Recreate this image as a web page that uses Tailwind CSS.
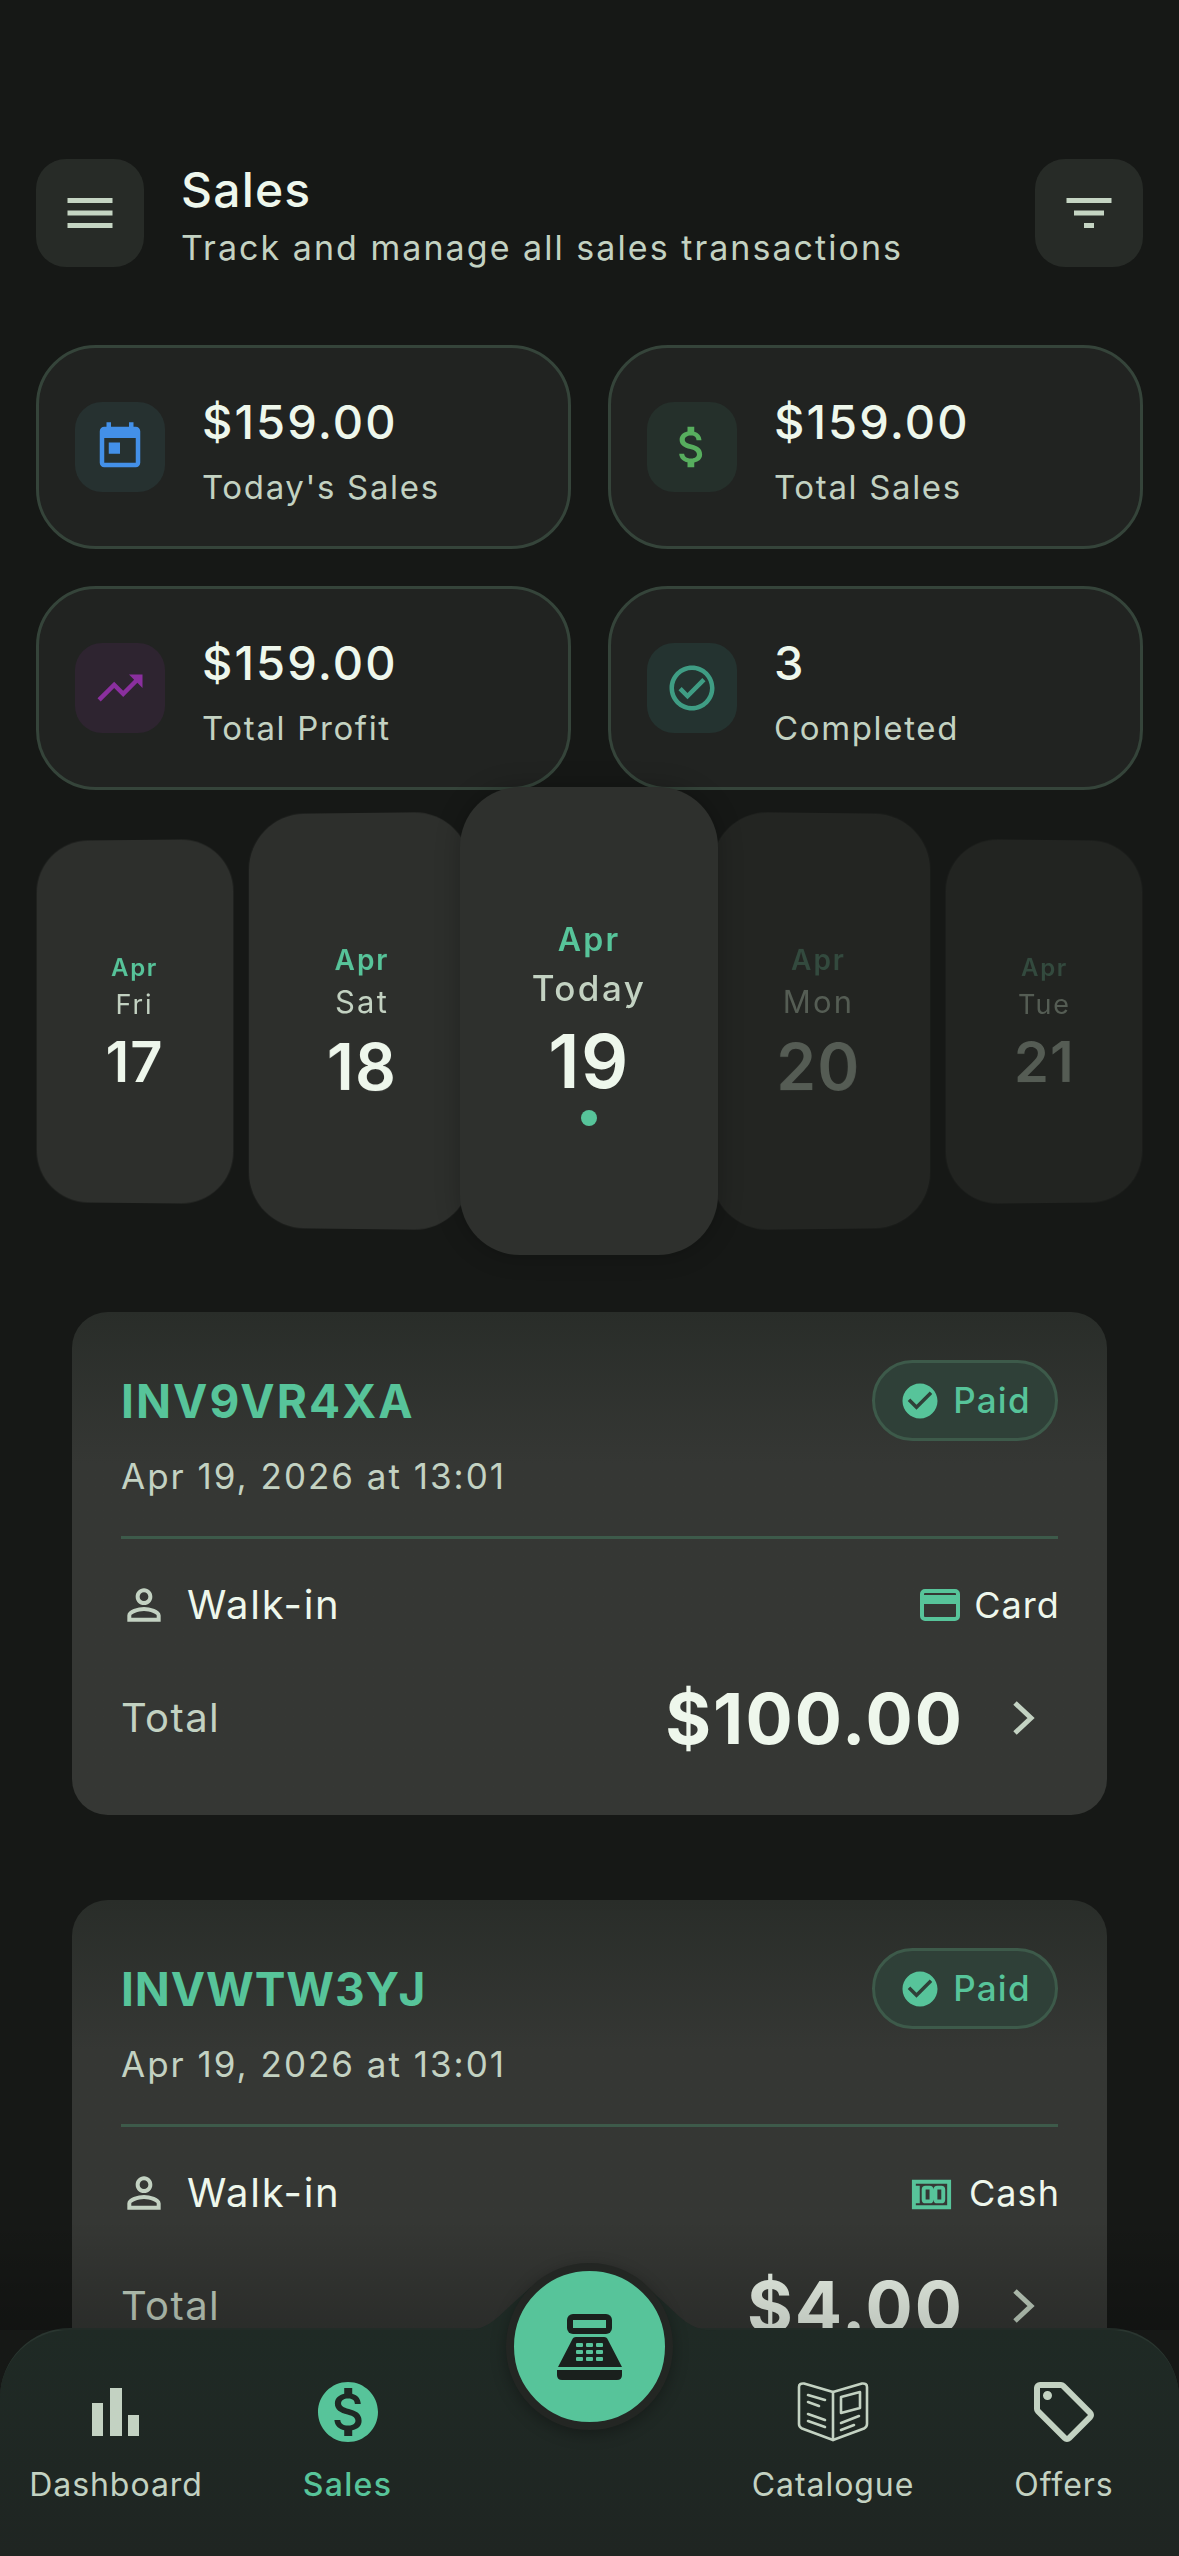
<!DOCTYPE html>
<html lang="en">
<head>
<meta charset="UTF-8" />
<meta name="viewport" content="width=device-width, initial-scale=1.0"/>
<title>Sales</title>
<script src="https://cdn.jsdelivr.net/npm/@tailwindcss/browser@4"></script>
</head>
<body class="bg-[#161816] [font-family:Inter,sans-serif] text-[#eef7ec]">
<div class="relative w-[1179px] h-[2556px] overflow-hidden bg-[#161816]">

  <!-- header -->
  <header class="flex items-start justify-between pt-[159px] px-[36px]">
    <div class="flex gap-[37px]">
      <button class="w-[108px] h-[108px] rounded-[30px] bg-[#272b27] flex items-center justify-center">
        <svg class="w-[60px] h-[60px]" viewBox="0 0 24 24" fill="#c5d5c3"><path d="M3 18h18v-2H3v2zm0-5h18v-2H3v2zm0-7v2h18V6H3z"/></svg>
      </button>
      <div>
        <h1 class="text-[48px] leading-[62px] font-medium tracking-[0.025em]">Sales</h1>
        <p class="text-[34px] leading-[52px] mt-[1px] tracking-[0.06em] text-[#c3d2c2]">Track and manage all sales transactions</p>
      </div>
    </div>
    <button class="w-[108px] h-[108px] rounded-[30px] bg-[#272b27] flex items-center justify-center">
      <svg class="w-[60px] h-[60px]" viewBox="0 0 24 24" fill="#c5d5c3"><path d="M10 18h4v-2h-4v2zM3 6v2h18V6H3zm3 7h12v-2H6v2z"/></svg>
    </button>
  </header>

  <!-- stats -->
  <section class="grid grid-cols-2 gap-[37px] px-[36px] mt-[71px]">
    <div class="h-[204px] rounded-[60px] border-[3px] border-[#35443a] bg-[#212321] flex items-center pl-[36px] gap-[37px]">
      <div class="w-[90px] h-[90px] rounded-[27px] bg-[#263130] flex items-center justify-center">
        <svg class="w-[54px] h-[54px]" viewBox="0 0 24 24" fill="#4390e8"><path d="M19 3h-1V1h-2v2H8V1H6v2H5c-1.11 0-1.99.9-1.99 2L3 19c0 1.1.89 2 2 2h14c1.1 0 2-.9 2-2V5c0-1.1-.9-2-2-2zm0 16H5V8h14v11zM7 10h5v5H7z"/></svg>
      </div>
      <div class="pt-[6px]">
        <div class="text-[47px] leading-[58px] font-medium tracking-[0.045em]">$159.00</div>
        <div class="text-[33px] leading-[42px] mt-[15px] tracking-[0.05em] text-[#c3d2c2]">Today's Sales</div>
      </div>
    </div>
    <div class="h-[204px] rounded-[60px] border-[3px] border-[#35443a] bg-[#212321] flex items-center pl-[36px] gap-[37px]">
      <div class="w-[90px] h-[90px] rounded-[27px] bg-[#25302b] flex items-center justify-center">
        <svg class="w-[54px] h-[54px]" viewBox="0 0 24 24" fill="#57ae5e"><path d="M11.8 10.9c-2.27-.59-3-1.2-3-2.15 0-1.09 1.01-1.85 2.7-1.85 1.78 0 2.44.85 2.5 2.1h2.21c-.07-1.72-1.12-3.3-3.21-3.81V3h-3v2.16c-1.94.42-3.5 1.68-3.5 3.61 0 2.31 1.91 3.46 4.7 4.13 2.5.6 3 1.48 3 2.41 0 .69-.49 1.79-2.7 1.79-2.06 0-2.87-.92-2.98-2.1h-2.2c.12 2.19 1.76 3.42 3.68 3.83V21h3v-2.15c1.95-.37 3.5-1.5 3.5-3.55 0-2.84-2.43-3.81-4.7-4.4z"/></svg>
      </div>
      <div class="pt-[6px]">
        <div class="text-[47px] leading-[58px] font-medium tracking-[0.045em]">$159.00</div>
        <div class="text-[33px] leading-[42px] mt-[15px] tracking-[0.05em] text-[#c3d2c2]">Total Sales</div>
      </div>
    </div>
    <div class="h-[204px] rounded-[60px] border-[3px] border-[#35443a] bg-[#212321] flex items-center pl-[36px] gap-[37px]">
      <div class="w-[90px] h-[90px] rounded-[27px] bg-[#2e2430] flex items-center justify-center">
        <svg class="w-[54px] h-[54px]" viewBox="0 0 24 24" fill="#8a2f9e"><path d="M16 6l2.29 2.29-4.88 4.88-4-4L2 16.59 3.41 18l6-6 4 4 6.3-6.29L22 12V6z"/></svg>
      </div>
      <div class="pt-[6px]">
        <div class="text-[47px] leading-[58px] font-medium tracking-[0.045em]">$159.00</div>
        <div class="text-[33px] leading-[42px] mt-[15px] tracking-[0.05em] text-[#c3d2c2]">Total Profit</div>
      </div>
    </div>
    <div class="h-[204px] rounded-[60px] border-[3px] border-[#35443a] bg-[#212321] flex items-center pl-[36px] gap-[37px]">
      <div class="w-[90px] h-[90px] rounded-[27px] bg-[#243330] flex items-center justify-center">
        <svg class="w-[54px] h-[54px]" viewBox="0 0 24 24" fill="#3f9d84"><path d="M12 2C6.48 2 2 6.48 2 12s4.48 10 10 10 10-4.48 10-10S17.52 2 12 2zm0 18c-4.41 0-8-3.59-8-8s3.59-8 8-8 8 3.59 8 8-3.59 8-8 8zm4.59-12.42L10 14.17l-2.59-2.58L6 13l4 4 8-8z"/></svg>
      </div>
      <div class="pt-[6px]">
        <div class="text-[47px] leading-[58px] font-medium tracking-[0.045em]">3</div>
        <div class="text-[33px] leading-[42px] mt-[15px] tracking-[0.05em] text-[#c3d2c2]">Completed</div>
      </div>
    </div>
  </section>

  <!-- date carousel -->
  <section class="relative flex items-center h-[468px] px-[36px] -mt-[3px]">
    <div class="shrink-0 w-[197px] h-[363px] rounded-[52px] bg-[#2d2f2c] [transform:perspective(1000px)_rotateY(-3deg)] flex flex-col items-center pt-[113px]">
      <div class="text-[24px] leading-[30px] font-semibold tracking-[0.07em] text-[#57c49a]">Apr</div>
      <div class="text-[27px] leading-[34px] mt-[5px] tracking-[0.07em] text-[#c3d2c2]">Fri</div>
      <div class="text-[56px] leading-[60px] mt-[10px] font-semibold tracking-[0.02em]">17</div>
    </div>
    <div class="shrink-0 ml-[15px] w-[222px] h-[416px] rounded-[56px] bg-[#2d2f2c] [transform:perspective(1000px)_rotateY(-3deg)] flex flex-col items-center pt-[130px] pl-[6px]">
      <div class="text-[28px] leading-[34px] font-semibold tracking-[0.07em] text-[#57c49a]">Apr</div>
      <div class="text-[31px] leading-[40px] mt-[5px] tracking-[0.07em] text-[#c3d2c2]">Sat</div>
      <div class="text-[64px] leading-[70px] mt-[10px] font-semibold tracking-[0.02em]">18</div>
    </div>
    <div class="relative z-10 shrink-0 -ml-[10px] w-[258px] h-[468px] rounded-[60px] bg-[#2e302d] shadow-[0_0_24px_rgba(0,0,0,0.25)] flex flex-col items-center pt-[133px]">
      <div class="text-[32px] leading-[40px] font-semibold tracking-[0.07em] text-[#57c49a]">Apr</div>
      <div class="text-[35px] leading-[48px] mt-[4px] font-medium tracking-[0.07em] text-[#c3d2c2]">Today</div>
      <div class="text-[74px] leading-[80px] mt-[9px] font-semibold tracking-[0.02em]">19</div>
      <div class="w-[16px] h-[16px] mt-[9px] rounded-full bg-[#57c49a]"></div>
    </div>
    <div class="shrink-0 -ml-[6px] w-[219px] h-[416px] rounded-[56px] bg-[#232522] [transform:perspective(1000px)_rotateY(3deg)] flex flex-col items-center pt-[130px] pr-[6px]">
      <div class="text-[28px] leading-[34px] font-semibold tracking-[0.07em] text-[#334a3e]">Apr</div>
      <div class="text-[31px] leading-[40px] mt-[5px] tracking-[0.07em] text-[#555d54]">Mon</div>
      <div class="text-[64px] leading-[70px] mt-[10px] font-semibold tracking-[0.02em] text-[#555c54]">20</div>
    </div>
    <div class="shrink-0 ml-[15px] w-[197px] h-[363px] rounded-[52px] bg-[#222421] [transform:perspective(1000px)_rotateY(3deg)] flex flex-col items-center pt-[113px]">
      <div class="text-[24px] leading-[30px] font-semibold tracking-[0.07em] text-[#334a3e]">Apr</div>
      <div class="text-[27px] leading-[34px] mt-[5px] tracking-[0.07em] text-[#555d54]">Tue</div>
      <div class="text-[56px] leading-[60px] mt-[10px] font-semibold tracking-[0.02em] text-[#555c54]">21</div>
    </div>
  </section>

  <!-- invoices -->
  <section class="flex flex-col gap-[85px] px-[72px] mt-[57px]">
    <article class="h-[503px] rounded-[36px] bg-linear-to-b from-[#292d29] to-[#353734] to-[30%] px-[49px] pt-[48px]">
      <div class="flex items-start justify-between">
        <div class="pt-[11px]">
          <div class="text-[46px] leading-[60px] font-bold tracking-[0.045em] text-[#57c49a]">INV9VR4XA</div>
          <div class="text-[35px] leading-[44px] mt-[23px] tracking-[0.057em] text-[#c3d2c2]">Apr 19, 2026 at 13:01</div>
        </div>
        <div class="w-[186px] h-[81px] rounded-full border-[3px] border-[#3d5a4a] bg-[#2f4038] flex items-center justify-center gap-[12px]">
          <svg class="w-[42px] h-[42px]" viewBox="0 0 24 24" fill="#57c49a"><path d="M12 2C6.48 2 2 6.48 2 12s4.48 10 10 10 10-4.48 10-10S17.52 2 12 2zm-2 15l-5-5 1.41-1.41L10 14.17l7.59-7.59L19 8l-9 9z"/></svg>
          <span class="text-[35px] font-medium tracking-[0.035em] text-[#57c49a]">Paid</span>
        </div>
      </div>
      <div class="h-[3px] mt-[38px] bg-[#3d5a4a]"></div>
      <div class="flex items-center justify-between h-[50px] mt-[41px]">
        <div class="flex items-center gap-[18px] -ml-[2px]">
          <svg class="w-[50px] h-[50px]" viewBox="0 0 24 24" fill="#c3d2c2"><path d="M12 5.9c1.16 0 2.1.94 2.1 2.1s-.94 2.1-2.1 2.1S9.9 9.16 9.9 8s.94-2.1 2.1-2.1m0 9c2.97 0 6.1 1.46 6.1 2.1v1.1H5.9V17c0-.64 3.13-2.1 6.1-2.1M12 4C9.79 4 8 5.79 8 8s1.79 4 4 4 4-1.79 4-4-1.79-4-4-4zm0 9c-2.67 0-8 1.34-8 4v3h16v-3c0-2.66-5.33-4-8-4z"/></svg>
          <span class="text-[40px] tracking-[0.043em]">Walk-in</span>
        </div>
        <div class="flex items-center gap-[14px] -mr-[2px]">
          <svg class="w-[40px] h-[32px]" viewBox="0 0 40 32"><rect x="2" y="2" width="36" height="28" rx="3" fill="none" stroke="#57c49a" stroke-width="4"/><rect x="2" y="6" width="36" height="9" fill="#57c49a"/></svg>
          <span class="text-[36px] tracking-[0.03em]">Card</span>
        </div>
      </div>
      <div class="flex items-center justify-between h-[80px] mt-[48px]">
        <span class="text-[40px] tracking-[0.035em] text-[#c3d2c2]">Total</span>
        <div class="flex items-center gap-[48px] pr-[21px]">
          <span class="text-[70px] font-bold tracking-[0.03em]">$100.00</span>
          <svg class="w-[25px] h-[36px]" viewBox="0 0 25 36" fill="none" stroke="#c3d2c2" stroke-width="5"><path d="M3 3l16 15L3 33"/></svg>
        </div>
      </div>
    </article>

    <article class="h-[503px] rounded-[36px] bg-linear-to-b from-[#292d29] to-[#353734] to-[30%] px-[49px] pt-[48px]">
      <div class="flex items-start justify-between">
        <div class="pt-[11px]">
          <div class="text-[46px] leading-[60px] font-bold tracking-[0.02em] text-[#57c49a]">INVWTW3YJ</div>
          <div class="text-[35px] leading-[44px] mt-[23px] tracking-[0.057em] text-[#c3d2c2]">Apr 19, 2026 at 13:01</div>
        </div>
        <div class="w-[186px] h-[81px] rounded-full border-[3px] border-[#3d5a4a] bg-[#2f4038] flex items-center justify-center gap-[12px]">
          <svg class="w-[42px] h-[42px]" viewBox="0 0 24 24" fill="#57c49a"><path d="M12 2C6.48 2 2 6.48 2 12s4.48 10 10 10 10-4.48 10-10S17.52 2 12 2zm-2 15l-5-5 1.41-1.41L10 14.17l7.59-7.59L19 8l-9 9z"/></svg>
          <span class="text-[35px] font-medium tracking-[0.035em] text-[#57c49a]">Paid</span>
        </div>
      </div>
      <div class="h-[3px] mt-[38px] bg-[#3d5a4a]"></div>
      <div class="flex items-center justify-between h-[50px] mt-[41px]">
        <div class="flex items-center gap-[18px] -ml-[2px]">
          <svg class="w-[50px] h-[50px]" viewBox="0 0 24 24" fill="#c3d2c2"><path d="M12 5.9c1.16 0 2.1.94 2.1 2.1s-.94 2.1-2.1 2.1S9.9 9.16 9.9 8s.94-2.1 2.1-2.1m0 9c2.97 0 6.1 1.46 6.1 2.1v1.1H5.9V17c0-.64 3.13-2.1 6.1-2.1M12 4C9.79 4 8 5.79 8 8s1.79 4 4 4 4-1.79 4-4-1.79-4-4-4zm0 9c-2.67 0-8 1.34-8 4v3h16v-3c0-2.66-5.33-4-8-4z"/></svg>
          <span class="text-[40px] tracking-[0.043em]">Walk-in</span>
        </div>
        <div class="flex items-center gap-[14px] -mr-[2px]">
          <svg class="w-[47px] h-[47px]" viewBox="0 0 24 24" fill="#57c49a"><path d="M2,5H22V20H2V5M20,18V7H4V18H20M17,8A2,2 0 0,1 19,10V15A2,2 0 0,1 17,17H15A2,2 0 0,1 13,15V10A2,2 0 0,1 15,8H17M17,10H15V15H17V10M11,8A2,2 0 0,1 13,10V15A2,2 0 0,1 11,17H9A2,2 0 0,1 7,15V10A2,2 0 0,1 9,8H11M11,10H9V15H11V10M6,17H4V8H6V17Z"/></svg>
          <span class="text-[36px] tracking-[0.03em]">Cash</span>
        </div>
      </div>
      <div class="flex items-center justify-between h-[80px] mt-[48px]">
        <span class="text-[40px] tracking-[0.035em] text-[#c3d2c2]">Total</span>
        <div class="flex items-center gap-[48px] pr-[21px]">
          <span class="text-[70px] font-bold tracking-[0.03em]">$4.00</span>
          <svg class="w-[25px] h-[36px]" viewBox="0 0 25 36" fill="none" stroke="#c3d2c2" stroke-width="5"><path d="M3 3l16 15L3 33"/></svg>
        </div>
      </div>
    </article>
  </section>

  <!-- bottom nav -->
  <nav class="absolute left-0 right-0 bottom-0 h-[228px] rounded-t-[70px] border-t-2 border-[#2a3630] bg-linear-to-b from-[#1f2a25] to-[#1f2522]">
    <div class="absolute left-0 right-0 bottom-full h-[110px] bg-linear-to-b from-transparent to-black/20 pointer-events-none"></div>
    <svg class="absolute left-[461px] -top-[64px] w-[256px] h-[66px]" viewBox="0 0 256 64"><path d="M0 64C25 64 35 52 50 38L70 20H186L206 38C221 52 231 64 256 64Z" fill="#1f2a25"/></svg>
    <div class="absolute left-[506px] -top-[67px] w-[167px] h-[167px] rounded-full border-[8px] border-[#232623] bg-[#57c49a] shadow-[0_4px_16px_rgba(0,0,0,0.3)] flex items-center justify-center">
      <svg class="w-[66px] h-[66px]" viewBox="0 0 66 66">
        <rect x="10" y="0" width="45" height="20" rx="6" fill="#1a201d"/>
        <rect x="16" y="6" width="33" height="8" fill="#57c49a"/>
        <path d="M19 23H47Q50 23 51 26L65 53H1L15 26Q16 23 19 23Z" fill="#1a201d"/>
        <g fill="#57c49a">
          <rect x="19" y="29" width="7" height="4" rx="1"/><rect x="29" y="29" width="7" height="4" rx="1"/><rect x="39" y="29" width="7" height="4" rx="1"/>
          <rect x="19" y="36" width="7" height="4" rx="1"/><rect x="29" y="36" width="7" height="4" rx="1"/><rect x="39" y="36" width="7" height="4" rx="1"/>
          <rect x="19" y="43" width="7" height="4" rx="1"/><rect x="29" y="43" width="7" height="4" rx="1"/><rect x="39" y="43" width="7" height="4" rx="1"/>
        </g>
        <path d="M0 56H65V61Q65 66 60 66H5Q0 66 0 61Z" fill="#1a201d"/>
      </svg>
    </div>
    <div class="grid grid-cols-[232px_231px_254px_232px_230px] pt-[52px]">
      <a class="flex flex-col items-center">
        <svg class="w-[60px] h-[60px]" viewBox="0 0 60 60" fill="#c3d2c2"><rect x="6" y="21" width="11" height="33"/><rect x="24" y="6" width="12" height="48"/><rect x="42" y="33" width="11" height="21"/></svg>
        <span class="text-[32px] leading-[44px] mt-[21px] tracking-[0.03em] text-[#c3d2c2]">Dashboard</span>
      </a>
      <a class="flex flex-col items-center">
        <svg class="w-[72px] h-[72px] -my-[6px]" viewBox="0 0 24 24" fill="#57c49a"><path d="M12 2C6.48 2 2 6.48 2 12s4.48 10 10 10 10-4.48 10-10S17.52 2 12 2zm1.41 16.09V20h-2.67v-1.93c-1.71-.36-3.16-1.46-3.27-3.4h1.96c.1 1.05.82 1.87 2.65 1.87 1.96 0 2.4-.98 2.4-1.59 0-.83-.44-1.61-2.67-2.14-2.48-.6-4.18-1.62-4.18-3.67 0-1.72 1.39-2.84 3.11-3.21V4h2.67v1.95c1.86.45 2.79 1.86 2.85 3.39H14.3c-.05-1.11-.64-1.87-2.22-1.87-1.5 0-2.4.68-2.4 1.64 0 .84.65 1.39 2.67 1.91s4.18 1.39 4.18 3.91c-.01 1.83-1.38 2.83-3.12 3.16z"/></svg>
        <span class="text-[32px] leading-[44px] mt-[21px] font-medium tracking-[0.04em] text-[#57c49a]">Sales</span>
      </a>
      <div></div>
      <a class="flex flex-col items-center">
        <svg class="w-[72px] h-[60px]" viewBox="0 0 72 60" fill="none" stroke="#c3d2c2" stroke-width="2.6" stroke-linecap="round" stroke-linejoin="round">
          <path d="M36 10L7 1.5Q2 1 2 5V42Q2 45 5 46.5L36 58L67 46.5Q70 45 70 42V5Q70 1 65 1.5Z"/>
          <path d="M36 10V58"/>
          <path d="M11 13L28 18M11 20L22 24M11 32L28 38M11 39L28 45"/>
          <path d="M44 15L63 10V26L44 31ZM44 41L62 34M44 48L57 43"/>
        </svg>
        <span class="text-[32px] leading-[44px] mt-[21px] tracking-[0.03em] text-[#c3d2c2]">Catalogue</span>
      </a>
      <a class="flex flex-col items-center">
        <svg class="w-[72px] h-[72px] -my-[6px]" viewBox="0 0 24 24" fill="#c3d2c2"><path d="M21.41 11.58L12.41 2.58A2 2 0 0 0 11 2H4A2 2 0 0 0 2 4V11A2 2 0 0 0 2.59 12.42L11.59 21.42A2 2 0 0 0 13 22A2 2 0 0 0 14.41 21.41L21.41 14.41A2 2 0 0 0 22 13A2 2 0 0 0 21.41 11.58M13 20L4 11V4H11L20 13M6.5 5A1.5 1.5 0 1 1 5 6.5A1.5 1.5 0 0 1 6.5 5Z"/></svg>
        <span class="text-[32px] leading-[44px] mt-[21px] tracking-[0.03em] text-[#c3d2c2]">Offers</span>
      </a>
    </div>
  </nav>
</div>
</body>
</html>
